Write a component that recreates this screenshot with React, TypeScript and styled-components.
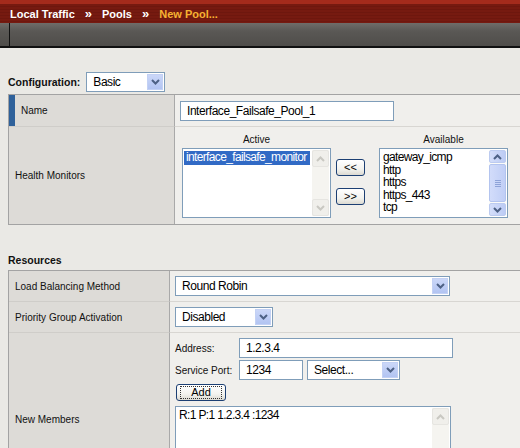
import React from "react";
import styled, { createGlobalStyle, css } from "styled-components";

const GlobalStyle = createGlobalStyle`
  html, body {
    margin: 0;
    padding: 0;
    background: #eae9e5;
    font-family: "Liberation Sans", Arial, sans-serif;
    overflow: hidden;
  }
`;

const Page = styled.div`
  width: 520px;
  height: 448px;
  overflow: hidden;
`;

const TitleBar = styled.div`
  height: 23px;
  box-sizing: border-box;
  border-top: 4px solid #a42b1c;
  background: repeating-linear-gradient(
    to bottom,
    #761a10 0px,
    #761a10 2px,
    #6e170e 2px,
    #6e170e 3px
  );
  display: flex;
  align-items: center;
  padding-left: 10px;
  font-family: "Liberation Sans", Arial, sans-serif;
  font-weight: bold;
  font-size: 11px;
  color: #ffffff;
  white-space: nowrap;
`;

const Crumb = styled.span<{ current?: boolean }>`
  color: ${(p) => (p.current ? "#f6b232" : "#ffffff")};
`;

const Sep = styled.span`
  margin: 0 10px 0 10px;
  font-size: 13px;
  line-height: 13px;
`;

const SubBar = styled.div`
  height: 23px;
  background: linear-gradient(to bottom, #6f6c69 0%, #5a5855 35%, #4f4d4a 100%);
  border-bottom: 2px solid #111;
  display: flex;
`;

const SubTab = styled.div`
  width: 9px;
  border-right: 1px solid #111;
`;

const Content = styled.div`
  padding-left: 8px;
`;

const ConfigRow = styled.div`
  display: flex;
  align-items: center;
  gap: 6px;
  margin-top: 24px;
  height: 20px;
`;

const SectionTitle = styled.div`
  font-family: "Liberation Sans", Arial, sans-serif;
  font-weight: bold;
  font-size: 10.5px;
  color: #111;
`;

const ResourcesTitle = styled(SectionTitle)`
  margin-top: 27px;
  height: 16px;
  display: flex;
  align-items: center;
`;

const Table = styled.div<{ labelWidth: number }>`
  margin-top: 2px;
  display: grid;
  grid-template-columns: ${(p) => p.labelWidth}px 1fr;
  border-top: 1px solid #a3a3a3;
  border-left: 1px solid #a3a3a3;
  border-bottom: 1px solid #a3a3a3;
  width: 530px;
`;

const LabelCell = styled.div<{ h: number; marked?: boolean }>`
  height: ${(p) => p.h}px;
  background: #dddbd7;
  border-right: 1px solid #a9a9a9;
  border-top: 1px solid #cfcdc9;
  display: flex;
  align-items: center;
  padding-left: ${(p) => (p.marked ? "12px" : "6px")};
  box-sizing: border-box;
  font-size: 10px;
  color: #111;
  position: relative;
  ${(p) =>
    p.marked &&
    css`
      &::before {
        content: "";
        position: absolute;
        left: 0;
        top: 0;
        bottom: 0;
        width: 6px;
        background: #2f619a;
      }
    `}
  &:first-of-type {
    border-top: none;
  }
`;

const ValueCell = styled.div<{ h: number; pt?: number }>`
  height: ${(p) => p.h}px;
  background: #f0efec;
  border-top: 1px solid #d8d6d2;
  box-sizing: border-box;
  padding: ${(p) => p.pt ?? 0}px 0 0 5px;
  display: flex;
  flex-direction: column;
  justify-content: ${(p) => (p.pt === undefined ? "center" : "flex-start")};
  &:nth-of-type(2) {
    border-top: none;
  }
`;

const fieldText = css`
  font-family: "Liberation Sans", Arial, sans-serif;
  font-size: 12px;
  letter-spacing: -0.45px;
  color: #000;
`;

const TextInput = styled.div<{ w: number }>`
  ${fieldText}
  width: ${(p) => p.w}px;
  height: 20px;
  box-sizing: border-box;
  border: 1px solid #7f9db9;
  background: #fff;
  padding-left: 6px;
  display: flex;
  align-items: center;
  white-space: nowrap;
`;

const SelectBox = styled.div<{ w: number }>`
  ${fieldText}
  width: ${(p) => p.w}px;
  height: 20px;
  box-sizing: border-box;
  border: 1px solid #7f9db9;
  background: #fff;
  display: flex;
  align-items: center;
  padding: 1px 1px 1px 6px;
  white-space: nowrap;
`;

const SelectText = styled.span`
  flex: 1;
`;

const DropArrow = styled.div`
  width: 16px;
  height: 16px;
  background: linear-gradient(to bottom, #cbd7f8, #b2c4f2);
  border: 1px solid #c3d1f4;
  box-sizing: border-box;
  display: flex;
  align-items: center;
  justify-content: center;
`;

const Chevron = ({ up, color = "#4d6185" }: { up?: boolean; color?: string }) => (
  <svg width="9" height="6" viewBox="0 0 9 6">
    <path
      d={up ? "M1 5 L4.5 1.5 L8 5" : "M1 1 L4.5 4.5 L8 1"}
      fill="none"
      stroke={color}
      strokeWidth="2"
    />
  </svg>
);

const Select = ({ w, value }: { w: number; value: string }) => (
  <SelectBox w={w}>
    <SelectText>{value}</SelectText>
    <DropArrow>
      <Chevron />
    </DropArrow>
  </SelectBox>
);

const Monitors = styled.div`
  display: flex;
  align-items: flex-start;
  padding-left: 2px;
`;

const MonitorColumn = styled.div`
  display: flex;
  flex-direction: column;
  align-items: center;
`;

const ColumnHeading = styled.div`
  font-size: 10px;
  color: #111;
  height: 18px;
  display: flex;
  align-items: center;
`;

const ListFrame = styled.div<{ w: number; h: number }>`
  width: ${(p) => p.w}px;
  height: ${(p) => p.h}px;
  box-sizing: border-box;
  border: 1px solid #7f9db9;
  background: #fff;
  display: flex;
  padding: 1px;
`;

const ListItems = styled.div`
  ${fieldText}
  letter-spacing: -0.65px;
  flex: 1;
  line-height: 12.5px;
  overflow: hidden;
  padding-top: 1px;
`;

const ListItem = styled.div<{ selected?: boolean }>`
  padding-left: 2px;
  white-space: nowrap;
  ${(p) =>
    p.selected &&
    css`
      background: #316ac5;
      color: #fff;
      margin-right: 2px;
      padding-bottom: 1px;
    `}
`;

const ScrollBar = styled.div<{ disabled?: boolean }>`
  width: 17px;
  flex-shrink: 0;
  display: flex;
  flex-direction: column;
  justify-content: space-between;
  background: ${(p) => (p.disabled ? "#f5f4f0" : "#fbfbf8")};
`;

const ScrollButton = styled.div<{ disabled?: boolean }>`
  height: 17px;
  box-sizing: border-box;
  border: 1px solid ${(p) => (p.disabled ? "#e6e5e1" : "#bccbf0")};
  border-radius: 2px;
  background: ${(p) =>
    p.disabled
      ? "#f0efeb"
      : "linear-gradient(to right, #d4defa, #bccbf4)"};
  display: flex;
  align-items: center;
  justify-content: center;
`;

const Thumb = styled.div`
  height: 38px;
  margin: 1px 0;
  box-sizing: border-box;
  border: 1px solid #b3c4ef;
  border-radius: 2px;
  background: linear-gradient(to right, #d2dcfa, #c0cef6);
  display: flex;
  flex-direction: column;
  align-items: center;
  justify-content: center;
  gap: 1px;
`;

const Grip = styled.div`
  width: 6px;
  height: 1px;
  background: #8ea3d8;
`;

const ScrollTrack = styled.div`
  flex: 1;
  display: flex;
  flex-direction: column;
`;

const Scroller = ({
  disabled,
  thumb,
}: {
  disabled?: boolean;
  thumb?: boolean;
}) => (
  <ScrollBar disabled={disabled}>
    <ScrollButton disabled={disabled}>
      <Chevron up color={disabled ? "#c9c8c2" : "#4d6185"} />
    </ScrollButton>
    <ScrollTrack>
      {thumb && (
        <Thumb>
          <Grip />
          <Grip />
          <Grip />
          <Grip />
        </Thumb>
      )}
    </ScrollTrack>
    <ScrollButton disabled={disabled}>
      <Chevron color={disabled ? "#c9c8c2" : "#4d6185"} />
    </ScrollButton>
  </ScrollBar>
);

const MoveButtons = styled.div`
  display: flex;
  flex-direction: column;
  gap: 12px;
  margin: 29px 14px 0 5px;
`;

const XpButton = styled.div<{ w: number }>`
  width: ${(p) => p.w}px;
  height: 17px;
  box-sizing: border-box;
  border: 1px solid #1c3f73;
  border-radius: 3px;
  background: linear-gradient(to bottom, #ffffff 0%, #f3f3ef 60%, #dcdad2 100%);
  font-size: 11px;
  line-height: 15px;
  color: #000;
  display: flex;
  align-items: center;
  justify-content: center;
  position: relative;
`;

const FocusRing = styled.div`
  position: absolute;
  inset: 1px 3px;
  border: 1px dotted #333;
`;

const MemberForm = styled.div`
  display: flex;
  flex-direction: column;
  gap: 2px;
`;

const FormLine = styled.div`
  display: flex;
  align-items: center;
  gap: 4px;
`;

const FormLabel = styled.div`
  width: 60px;
  font-size: 10px;
  color: #111;
  white-space: nowrap;
`;

const AddRow = styled.div`
  margin: 2px 0 0 1px;
`;

const MembersBox = styled(ListFrame)`
  margin-top: 3px;
  border-bottom: none;
`;

export default function App() {
  return (
    <Page>
      <GlobalStyle />
      <TitleBar>
        <Crumb>Local Traffic</Crumb>
        <Sep>»</Sep>
        <Crumb>Pools</Crumb>
        <Sep>»</Sep>
        <Crumb current>New Pool...</Crumb>
      </TitleBar>
      <SubBar>
        <SubTab />
      </SubBar>
      <Content>
        <ConfigRow>
          <SectionTitle>Configuration:</SectionTitle>
          <Select w={79} value="Basic" />
        </ConfigRow>
        <Table labelWidth={166}>
          <LabelCell h={31} marked>
            Name
          </LabelCell>
          <ValueCell h={31}>
            <TextInput w={214}>Interface_Failsafe_Pool_1</TextInput>
          </ValueCell>
          <LabelCell h={98}>Health Monitors</LabelCell>
          <ValueCell h={98} pt={3}>
            <Monitors>
              <MonitorColumn>
                <ColumnHeading>Active</ColumnHeading>
                <ListFrame w={149} h={70}>
                  <ListItems>
                    <ListItem selected>interface_failsafe_monitor</ListItem>
                  </ListItems>
                  <Scroller disabled />
                </ListFrame>
              </MonitorColumn>
              <MoveButtons>
                <XpButton w={29}>&lt;&lt;</XpButton>
                <XpButton w={29}>&gt;&gt;</XpButton>
              </MoveButtons>
              <MonitorColumn>
                <ColumnHeading>Available</ColumnHeading>
                <ListFrame w={129} h={70}>
                  <ListItems>
                    <ListItem>gateway_icmp</ListItem>
                    <ListItem>http</ListItem>
                    <ListItem>https</ListItem>
                    <ListItem>https_443</ListItem>
                    <ListItem>tcp</ListItem>
                  </ListItems>
                  <Scroller thumb />
                </ListFrame>
              </MonitorColumn>
            </Monitors>
          </ValueCell>
        </Table>
        <ResourcesTitle>Resources</ResourcesTitle>
        <Table labelWidth={161}>
          <LabelCell h={30}>Load Balancing Method</LabelCell>
          <ValueCell h={30}>
            <Select w={275} value="Round Robin" />
          </ValueCell>
          <LabelCell h={31}>Priority Group Activation</LabelCell>
          <ValueCell h={31}>
            <Select w={98} value="Disabled" />
          </ValueCell>
          <LabelCell h={174}>New Members</LabelCell>
          <ValueCell h={174} pt={5}>
            <MemberForm>
              <FormLine>
                <FormLabel>Address:</FormLabel>
                <TextInput w={214}>1.2.3.4</TextInput>
              </FormLine>
              <FormLine>
                <FormLabel>Service Port:</FormLabel>
                <TextInput w={64}>1234</TextInput>
                <Select w={93} value="Select..." />
              </FormLine>
              <AddRow>
                <XpButton w={50}>
                  <FocusRing />
                  Add
                </XpButton>
              </AddRow>
              <MembersBox w={276} h={80}>
                <ListItems>
                  <ListItem>R:1 P:1 1.2.3.4 :1234</ListItem>
                </ListItems>
                <Scroller disabled />
              </MembersBox>
            </MemberForm>
          </ValueCell>
        </Table>
      </Content>
    </Page>
  );
}
